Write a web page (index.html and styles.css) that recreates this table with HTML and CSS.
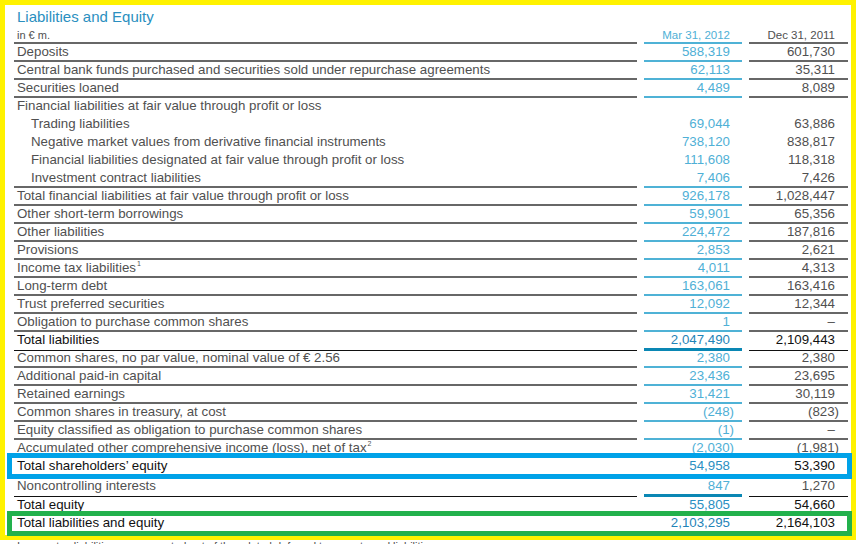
FILE: index.html
```html
<!DOCTYPE html>
<html lang="en">
<head>
<meta charset="utf-8">
<title>Liabilities and Equity</title>
<link rel="stylesheet" href="styles.css">
</head>
<body>
<div class="page">
  <h1 class="title">Liabilities and Equity</h1>
  <div class="sheet">
    <div class="row head"><div class="lbl">in € m.</div><div class="c1">Mar 31, 2012</div><div class="c2">Dec 31, 2011</div></div>
    <div class="row"><div class="lbl">Deposits</div><div class="c1">588,319</div><div class="c2">601,730</div></div>
    <div class="row"><div class="lbl">Central bank funds purchased and securities sold under repurchase agreements</div><div class="c1">62,113</div><div class="c2">35,311</div></div>
    <div class="row"><div class="lbl">Securities loaned</div><div class="c1">4,489</div><div class="c2">8,089</div></div>
    <div class="row open"><div class="lbl">Financial liabilities at fair value through profit or loss</div><div class="c1"></div><div class="c2"></div></div>
    <div class="row open sub"><div class="lbl">Trading liabilities</div><div class="c1">69,044</div><div class="c2">63,886</div></div>
    <div class="row open sub"><div class="lbl">Negative market values from derivative financial instruments</div><div class="c1">738,120</div><div class="c2">838,817</div></div>
    <div class="row open sub"><div class="lbl">Financial liabilities designated at fair value through profit or loss</div><div class="c1">111,608</div><div class="c2">118,318</div></div>
    <div class="row sub"><div class="lbl">Investment contract liabilities</div><div class="c1">7,406</div><div class="c2">7,426</div></div>
    <div class="row"><div class="lbl">Total financial liabilities at fair value through profit or loss</div><div class="c1">926,178</div><div class="c2">1,028,447</div></div>
    <div class="row"><div class="lbl">Other short-term borrowings</div><div class="c1">59,901</div><div class="c2">65,356</div></div>
    <div class="row"><div class="lbl">Other liabilities</div><div class="c1">224,472</div><div class="c2">187,816</div></div>
    <div class="row"><div class="lbl">Provisions</div><div class="c1">2,853</div><div class="c2">2,621</div></div>
    <div class="row"><div class="lbl">Income tax liabilities<sup class="fn">1</sup></div><div class="c1">4,011</div><div class="c2">4,313</div></div>
    <div class="row"><div class="lbl">Long-term debt</div><div class="c1">163,061</div><div class="c2">163,416</div></div>
    <div class="row"><div class="lbl">Trust preferred securities</div><div class="c1">12,092</div><div class="c2">12,344</div></div>
    <div class="row"><div class="lbl">Obligation to purchase common shares</div><div class="c1">1</div><div class="c2">–</div></div>
    <div class="row total"><div class="lbl">Total liabilities</div><div class="c1 strong">2,047,490</div><div class="c2">2,109,443</div></div>
    <div class="row"><div class="lbl">Common shares, no par value, nominal value of € 2.56</div><div class="c1">2,380</div><div class="c2">2,380</div></div>
    <div class="row"><div class="lbl">Additional paid-in capital</div><div class="c1">23,436</div><div class="c2">23,695</div></div>
    <div class="row"><div class="lbl">Retained earnings</div><div class="c1">31,421</div><div class="c2">30,119</div></div>
    <div class="row"><div class="lbl">Common shares in treasury, at cost</div><div class="c1"><span class="neg">(248)</span></div><div class="c2"><span class="neg">(823)</span></div></div>
    <div class="row"><div class="lbl">Equity classified as obligation to purchase common shares</div><div class="c1"><span class="neg">(1)</span></div><div class="c2">–</div></div>
    <div class="row"><div class="lbl">Accumulated other comprehensive income (loss), net of tax<sup class="fn">2</sup></div><div class="c1"><span class="neg">(2,030)</span></div><div class="c2"><span class="neg">(1,981)</span></div></div>
    <div class="row open key mid-row"><div class="lbl">Total shareholders’ equity</div><div class="c1 mid">54,958</div><div class="c2">53,390</div></div>
    <div class="row total tall"><div class="lbl">Noncontrolling interests</div><div class="c1">847</div><div class="c2">1,270</div></div>
    <div class="row open key"><div class="lbl">Total equity</div><div class="c1 mid">55,805</div><div class="c2">54,660</div></div>
    <div class="row open key"><div class="lbl">Total liabilities and equity</div><div class="c1 strong">2,103,295</div><div class="c2">2,164,103</div></div>
  </div>
  <p class="note">Income tax liabilities are presented net of the related deferred tax assets and liabilities.</p>
</div>
<div class="frame frame-yellow"></div>
<div class="frame frame-blue"></div>
<div class="frame frame-green"></div>
</body>
</html>
```
FILE: styles.css
```css
html, body {
  margin: 0;
  padding: 0;
  background: #ffffff;
}

body {
  font-family: "Liberation Sans", Arial, sans-serif;
  color: #505050;
  overflow: hidden;
}

.page {
  padding: 8px 0 0 14px;
}

.title {
  margin: 0;
  padding-left: 3px;
  font-size: 15px;
  font-weight: normal;
  line-height: 18px;
  color: #2a8fc0;
}

.sheet {
  display: flex;
  flex-direction: column;
}

.row {
  display: grid;
  grid-template-columns: 623px 98px 99px;
  column-gap: 7px;
  height: 18px;
  font-size: 13.3px;
  line-height: 16px;
}

.row > div {
  box-sizing: border-box;
  height: 100%;
  white-space: nowrap;
  border-bottom: 2px solid #676767;
}

.row .lbl {
  padding-left: 3px;
}

.row .c1 {
  text-align: right;
  padding-right: 12px;
  color: #4fb0d6;
  border-bottom-color: #4fb2d6;
}

.row .c2 {
  text-align: right;
  padding-right: 13px;
  color: #505050;
}

.row.head {
  font-size: 11.5px;
  line-height: 14px;
}

.row.head > div {
  padding-top: 2px;
}

.row.head .lbl {
  font-size: 11px;
}

.row.open > div {
  border-bottom-color: transparent;
}

.row.sub .lbl {
  padding-left: 17px;
}

.row.total > div {
  border-bottom: 1px solid #111111;
}

.row.total .c1 {
  border-bottom: 3px solid #0a87b4;
}

.row.total .lbl,
.row.total .c2,
.row.key .lbl,
.row.key .c2 {
  color: #111111;
}

.row.mid-row {
  height: 19px;
}

.row.total.tall {
  height: 20px;
}

.row.tall > div {
  padding-top: 1px;
}

.row.tall .lbl,
.row.tall .c2 {
  color: #505050;
}

.row.tall .c1 {
  color: #4fb0d6;
}

.row .c1.strong {
  color: #1f84b8;
}

.row .c1.mid {
  color: #2a8fc2;
}

.neg {
  margin-right: -4px;
}

.fn {
  font-size: 7px;
  line-height: 0;
  vertical-align: 6px;
  margin-left: 1px;
}

.note {
  margin: 6px 0 0 0;
  padding-left: 3px;
  font-size: 11px;
  line-height: 14px;
  color: #505050;
}

.frame {
  position: absolute;
  box-sizing: border-box;
  border-style: solid;
  border-width: 5px;
  pointer-events: none;
}

.frame-yellow {
  left: 0;
  top: 0;
  width: 856px;
  height: 540px;
  border-color: #fff200;
}

.frame-blue {
  left: 7px;
  top: 453px;
  width: 845px;
  height: 26px;
  border-color: #00a2e8;
}

.frame-green {
  left: 7px;
  top: 511px;
  width: 845px;
  height: 25px;
  border-color: #22b14c;
}
```
